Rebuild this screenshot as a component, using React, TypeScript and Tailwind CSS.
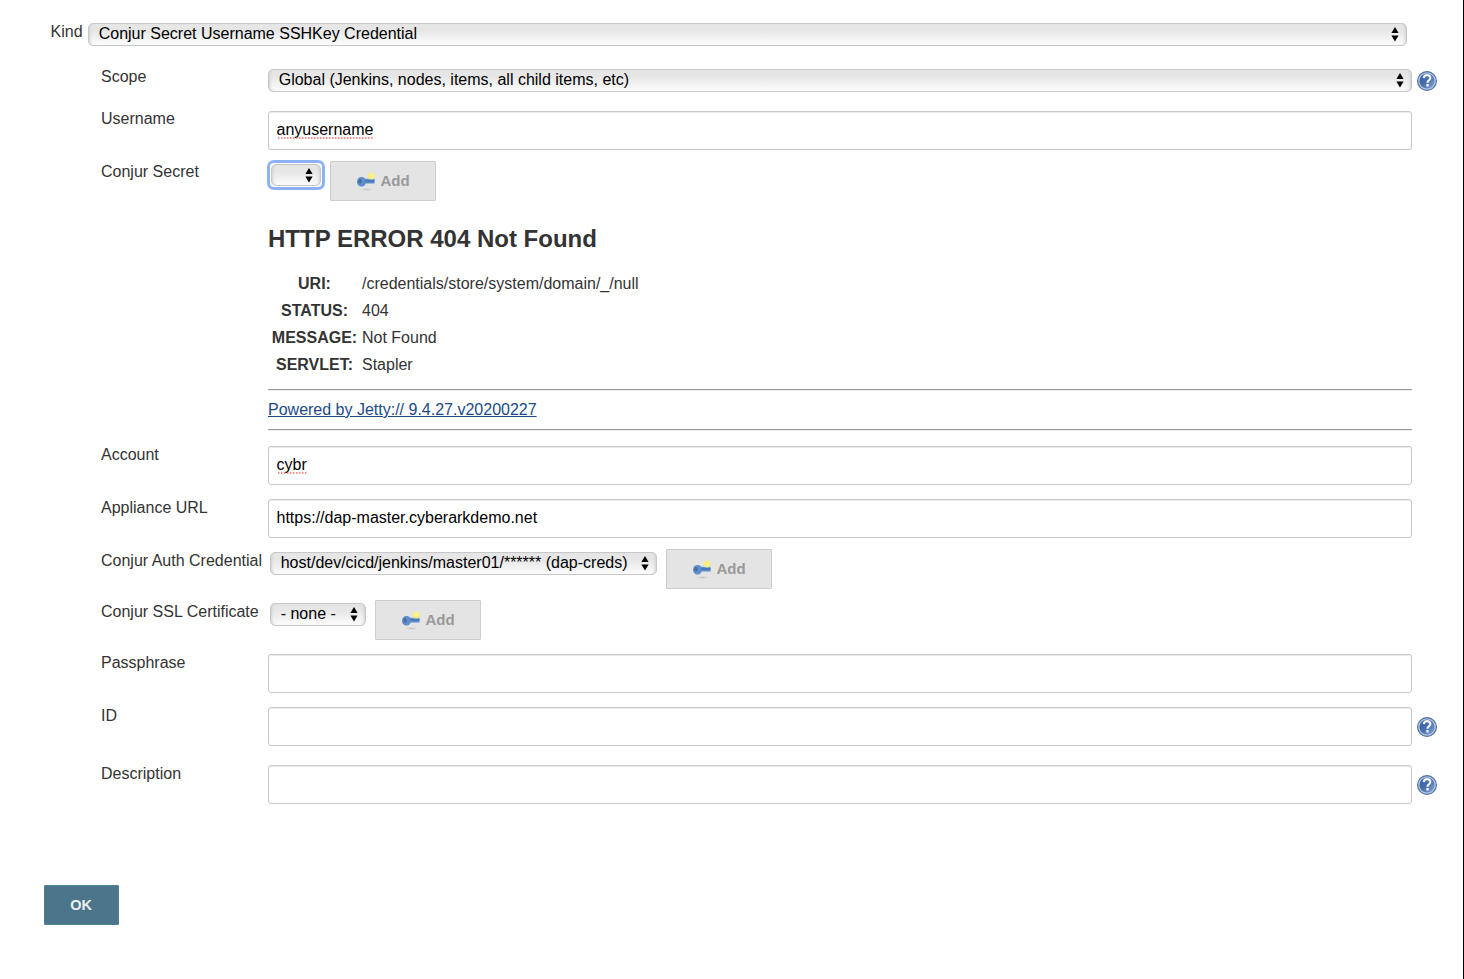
import type { ReactNode } from "react";

function Arrows() {
  return (
    <svg width="8" height="15" viewBox="0 0 8 15" className="shrink-0" fill="#000">
      <path d="M4 0L7.600 6H.4zM4 14.500L.4 8.500h7.200z" />
    </svg>
  );
}

function Select({ text, className }: { text: string; className: string }) {
  return (
    <div
      className={`flex h-[23px] shrink-0 items-center justify-between rounded-[5px] border border-[#c8c8c8] bg-gradient-to-b from-[#e6e6e6] from-30% to-[#fcfcfc] pl-[9.7px] text-black shadow-[inset_3px_0_3px_-2px_#d0d0d0,inset_-3px_0_3px_-2px_#d0d0d0] ${className}`}
    >
      <span className="-mt-[2px] whitespace-nowrap leading-[20px]">{text}</span>
      <Arrows />
    </div>
  );
}

function Key() {
  return (
    <svg width="20" height="20" viewBox="0 0 20 20" className="shrink-0">
      <defs>
        <radialGradient id="glow">
          <stop offset="0" stopColor="#fffb9a" />
          <stop offset=".5" stopColor="#faf06c" />
          <stop offset="1" stopColor="#f4ee90" stopOpacity=".35" />
        </radialGradient>
        <radialGradient id="shade">
          <stop offset="0" stopColor="#c4c4c4" />
          <stop offset="1" stopColor="#e4e4e4" />
        </radialGradient>
      </defs>
      <ellipse cx="10.500" cy="18.500" rx="6.500" ry="1.500" fill="url(#shade)" />
      <path d="M1 10.700C1 7.900 3 6 5.500 6c1.600 0 2.900.6 3.800 1.700h9.200v4.800H9.800c-.8 2.100-2.300 3.100-4.300 3.100C3 15.600 1 13.500 1 10.700z" fill="#5f8fca" />
      <path d="M9.300 9.200h9.200v1.600H9.300z" fill="#4577b8" />
      <ellipse cx="4" cy="10.200" rx="1.600" ry="2.200" fill="#486d99" />
      <circle cx="15.200" cy="5" r="3.900" fill="url(#glow)" />
    </svg>
  );
}

function AddButton({ className }: { className: string }) {
  return (
    <button
      className={`flex h-10 w-[106px] shrink-0 items-center rounded-[1px] border border-[#cccccc] bg-[#e4e4e4] pl-[25px] text-[15px] font-bold text-[#999] ${className}`}
    >
      <Key />
      <span className="ml-[4.5px]">Add</span>
    </button>
  );
}

function Help({ className }: { className: string }) {
  return (
    <svg width="20" height="20" viewBox="0 0 20 20" className={`ml-[5px] shrink-0 ${className}`}>
      <defs>
        <linearGradient id="ball" x1="0" y1="0" x2="1" y2="1">
          <stop offset="0" stopColor="#2f589f" />
          <stop offset=".5" stopColor="#4a70ae" />
          <stop offset="1" stopColor="#86a5d4" />
        </linearGradient>
      </defs>
      <circle cx="10" cy="10" r="9.400" fill="#b4c6e2" stroke="#52719f" strokeWidth="1.200" />
      <circle cx="10" cy="10" r="7.500" fill="url(#ball)" />
      <path d="M6.800 7.200c.2-2 1.500-3 3.200-3 2 0 3.300 1 3.300 2.800 0 2.300-2.800 2.200-2.800 4.700" fill="none" stroke="#f4f7fc" strokeWidth="2.200" />
      <rect x="9.300" y="13" width="2.400" height="2.500" fill="#f4f7fc" />
    </svg>
  );
}

function Input({ value, misspelled }: { value?: string; misspelled?: boolean }) {
  return (
    <div className="h-[39px] w-[1144px] shrink-0 rounded-[3px] border border-[#c8c8c8] bg-white pl-[7.5px] pt-[8px] leading-5 text-black shadow-[inset_0_1px_1px_#ececec]">
      {value && (
        <span className="relative inline-block">
          {value}
          {misspelled && (
            <svg className="absolute left-px top-[17px] h-[2px] w-full">
              <line x1="0" y1="1" x2="100%" y2="1" stroke="#ff6b66" strokeWidth="1.500" strokeDasharray="1.500 1.500" />
            </svg>
          )}
        </span>
      )}
    </div>
  );
}

function Row({ label, className, labelClass = "", children }: { label: string; className: string; labelClass?: string; children: ReactNode }) {
  return (
    <div className={`flex items-start pl-[101px] ${className}`}>
      <div className={`w-[167px] shrink-0 whitespace-nowrap leading-4 ${labelClass}`}>{label}</div>
      {children}
    </div>
  );
}

const details = [
  ["URI:", "/credentials/store/system/domain/_/null"],
  ["STATUS:", "404"],
  ["MESSAGE:", "Not Found"],
  ["SERVLET:", "Stapler"],
];

export default function App() {
  return (
    <div className="h-[979px] w-[1464px] overflow-hidden border-r border-black bg-white pt-[23px] font-['Liberation_Sans',Arial,sans-serif] text-[16px] text-[#333]">
      <div className="flex h-[46px] items-start pl-[50.5px]">
        <div className="mt-px w-[37.5px] leading-4">Kind</div>
        <Select text="Conjur Secret Username SSHKey Credential" className="w-[1319px] pr-[7px]" />
      </div>
      <Row label="Scope" className="h-[42px]">
        <Select text="Global (Jenkins, nodes, items, all child items, etc)" className="w-[1144px] pr-[7px]" />
        <Help className="mt-[2px]" />
      </Row>
      <Row label="Username" className="h-[50px]">
        <Input value="anyusername" misspelled />
      </Row>
      <Row label="Conjur Secret" className="h-[62px]" labelClass="mt-[3px]">
        <div className="-ml-px mt-[-1px] flex h-[30px] w-[58px] rounded-[7px] border-[3px] border-[#8cb1f5] bg-white p-px">
          <Select text="" className="h-[22px]! w-[50px] pr-[7px]" />
        </div>
        <AddButton className="ml-[5px]" />
      </Row>
      <div className="ml-[268px] w-[1144px]">
        <h2 className="h-[47px] text-[24px] font-bold leading-8">HTTP ERROR 404 Not Found</h2>
        <div className="h-[119px]">
          {details.map(([name, value]) => (
            <div key={name} className="flex h-[27px] items-center whitespace-nowrap">
              <div className="w-[93px] text-center font-bold">{name}</div>
              <div className="ml-px">{value}</div>
            </div>
          ))}
        </div>
        <hr className="h-[2px] border-b border-t border-b-[#eee] border-t-[#999]" />
        <div className="flex h-[38px] items-center">
          <a className="text-[#204a87] underline">Powered by Jetty:// 9.4.27.v20200227</a>
        </div>
        <hr className="h-[2px] border-b border-t border-b-[#eee] border-t-[#999]" />
      </div>
      <Row label="Account" className="mt-[15px] h-[53px]" labelClass="mt-px">
        <Input value="cybr" misspelled />
      </Row>
      <Row label="Appliance URL" className="h-[50px]" labelClass="mt-px">
        <Input value="https://dap-master.cyberarkdemo.net" />
      </Row>
      <Row label="Conjur Auth Credential" className="h-[51px]" labelClass="mt-1">
        <Select text="host/dev/cicd/jenkins/master01/****** (dap-creds)" className="ml-[2px] mt-[3px] w-[387px] pr-[7px]" />
        <AddButton className="ml-[9px]" />
      </Row>
      <Row label="Conjur SSL Certificate" className="h-[54px]" labelClass="mt-1">
        <Select text="- none -" className="ml-[2px] mt-[3px] w-[96px] pr-[7px]" />
        <AddButton className="ml-[9px]" />
      </Row>
      <Row label="Passphrase" className="h-[53px]" labelClass="mt-px">
        <Input />
      </Row>
      <Row label="ID" className="h-[58px]" labelClass="mt-px">
        <Input />
        <Help className="mt-[10px]" />
      </Row>
      <Row label="Description" className="h-[120px]" labelClass="mt-px">
        <Input />
        <Help className="mt-[10px]" />
      </Row>
      <button className="ml-11 h-10 w-[75px] rounded-[1px] border border-[#4d8296] bg-[#4b758b] pr-px pt-px text-[14.5px] font-bold text-[#eee]">OK</button>
    </div>
  );
}
